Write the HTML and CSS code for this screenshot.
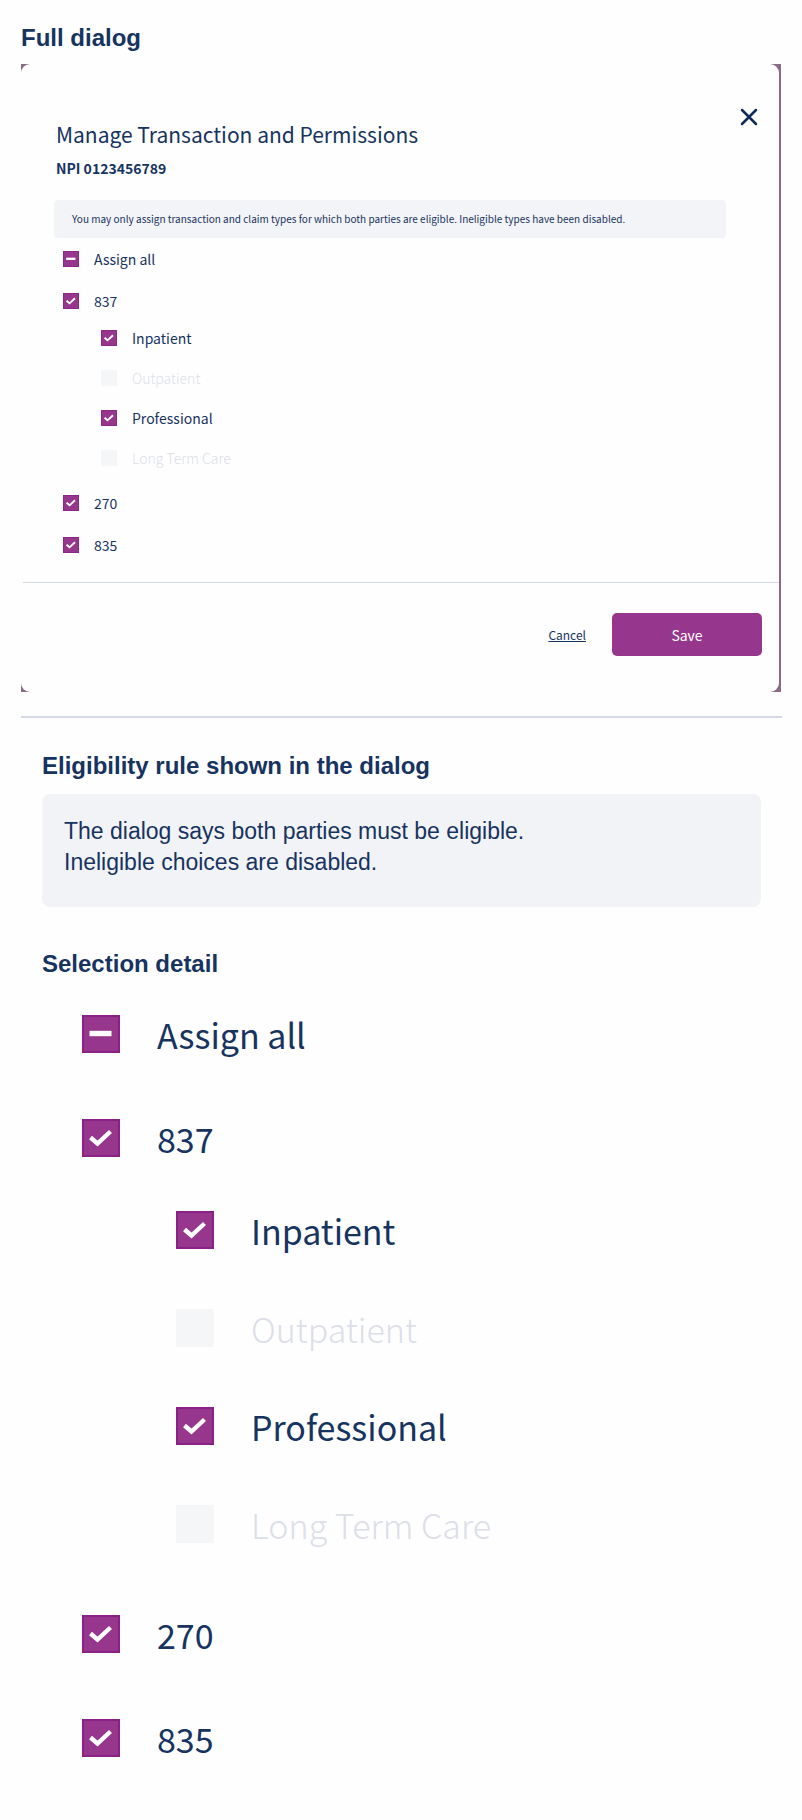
FILE: index.html
```html
<!DOCTYPE html>
<html lang="en">
<head>
  <meta charset="UTF-8">
  <meta name="viewport" content="width=device-width, initial-scale=1">
  <title>Manage Transaction and Permissions</title>
  <link rel="stylesheet" href="styles.css">
</head>
<body>

  <main class="page">
    <h2 class="heading">Full dialog</h2>

    <div class="backdrop">
      <form class="dialog" id="permissions">
        <div class="dialog-body">
          <header class="dialog-header">
            <div>
              <h1 class="title">Manage Transaction and Permissions</h1>
              <p class="npi">NPI 0123456789</p>
            </div>
            <button type="button" class="close" aria-label="Close">
              <svg width="18" height="18" viewBox="0 0 18 18">
                <path d="M2 2L16 16M16 2L2 16" fill="none" stroke="currentColor" stroke-width="2.5" stroke-linecap="round"/>
              </svg>
            </button>
          </header>

          <p class="notice">You may only assign transaction and claim types for which both parties are eligible. Ineligible types have been disabled.</p>

          <ul class="options">
            <li><label class="option"><input type="checkbox" name="all" class="partial">Assign all</label></li>
            <li>
              <label class="option"><input type="checkbox" name="837" checked>837</label>
              <ul class="suboptions">
                <li><label class="option"><input type="checkbox" name="inpatient" checked>Inpatient</label></li>
                <li><label class="option disabled"><input type="checkbox" name="outpatient" disabled>Outpatient</label></li>
                <li><label class="option"><input type="checkbox" name="professional" checked>Professional</label></li>
                <li><label class="option disabled"><input type="checkbox" name="longterm" disabled>Long Term Care</label></li>
              </ul>
            </li>
            <li><label class="option"><input type="checkbox" name="270" checked>270</label></li>
            <li><label class="option"><input type="checkbox" name="835" checked>835</label></li>
          </ul>
        </div>

        <footer class="dialog-footer">
          <a href="#" class="cancel">Cancel</a>
          <button type="submit" class="save">Save</button>
        </footer>
      </form>
    </div>

    <section class="details">
      <h2 class="heading">Eligibility rule shown in the dialog</h2>
      <p class="rule">The dialog says both parties must be eligible.<br>Ineligible choices are disabled.</p>

      <h2 class="heading">Selection detail</h2>
      <ul class="options large">
        <li><label class="option"><input type="checkbox" class="partial">Assign all</label></li>
        <li>
          <label class="option"><input type="checkbox" checked>837</label>
          <ul class="suboptions">
            <li><label class="option"><input type="checkbox" checked>Inpatient</label></li>
            <li><label class="option disabled"><input type="checkbox" disabled>Outpatient</label></li>
            <li><label class="option"><input type="checkbox" checked>Professional</label></li>
            <li><label class="option disabled"><input type="checkbox" disabled>Long Term Care</label></li>
          </ul>
        </li>
        <li><label class="option"><input type="checkbox" checked>270</label></li>
        <li><label class="option"><input type="checkbox" checked>835</label></li>
      </ul>
    </section>
  </main>

  <script>
    document.querySelectorAll('.partial').forEach(function(box) {
      box.indeterminate = true;
    });

    document.getElementById('permissions').addEventListener('submit', function(e) {
      e.preventDefault();
    });
  </script>

</body>
</html>
```
FILE: styles.css
```css
* {
  box-sizing: border-box;
}
body {
  margin: 0;
  background: #fefefe;
  color: #17335f;
  font-family: "Liberation Sans", Arial, sans-serif;
}
h1, h2, p, ul {
  margin: 0;
  padding: 0;
}
ul {
  list-style: none;
}
.page {
  padding: 24px 20px 24px 21px;
}
.heading {
  font-size: 24px;
  line-height: 28px;
  font-weight: bold;
}

/* dialog */
.backdrop {
  margin: 12px 1px 0 0;
  padding-right: 2px;
  background: #8a6a85;
}
.dialog {
  background: #fefefe;
  border-radius: 9px;
  font-family: "Noto Sans CJK SC", "Open Sans", sans-serif;
}
.dialog-body {
  padding: 44px 21px 16px 33px;
}
.dialog-header {
  display: flex;
  justify-content: space-between;
  align-items: flex-start;
  padding-left: 2px;
}
.title {
  margin-top: 10px;
  font-size: 21px;
  line-height: 32px;
  font-weight: normal;
}
.npi {
  margin-top: 6px;
  font-size: 14px;
  line-height: 24px;
  font-weight: bold;
}
.close {
  display: flex;
  padding: 0;
  border: none;
  background: none;
  color: #0f2a5c;
  cursor: pointer;
}
.notice {
  margin: 20px 32px 0 0;
  padding: 10px 18px;
  background: #f3f4f7;
  border-radius: 4px;
  font-size: 10px;
  line-height: 18px;
}

/* option lists */
.options {
  display: flex;
  flex-direction: column;
  gap: 8px;
  padding: 4px 9px;
  font-family: "Noto Sans CJK SC", "Open Sans", sans-serif;
  font-size: 14px;
}
.option {
  display: flex;
  align-items: center;
  gap: 15px;
  height: 34px;
}
.suboptions {
  padding-left: 38px;
}
.suboptions .option {
  height: 40px;
}
.option input {
  appearance: none;
  width: 16px;
  height: 16px;
  margin: 0;
  background: #f5f6f8 center / 100% no-repeat;
}
.option input:checked {
  background-color: #96368c;
  background-image: url("data:image/svg+xml,%3Csvg xmlns='http://www.w3.org/2000/svg' viewBox='0 0 38 38'%3E%3Cpath d='M1 1H37V37H1Z' fill='none' stroke='%238a2285' stroke-width='2'/%3E%3Cpath d='M8.5 18.5L15.5 24.5L28.5 12.5' fill='none' stroke='white' stroke-width='4.4'/%3E%3C/svg%3E");
}
.option input:indeterminate {
  background-color: #96368c;
  background-image: url("data:image/svg+xml,%3Csvg xmlns='http://www.w3.org/2000/svg' viewBox='0 0 38 38'%3E%3Cpath d='M1 1H37V37H1Z' fill='none' stroke='%238a2285' stroke-width='2'/%3E%3Cpath d='M7.5 18.5H29.5' stroke='white' stroke-width='5.4'/%3E%3C/svg%3E");
}
.disabled {
  color: #dcdee8;
  font-weight: 300;
}

.large {
  gap: 18px;
  padding: 13px 40px;
  font-size: 34px;
}
.large .option {
  gap: 37px;
  height: 86px;
}
.large .suboptions {
  padding-left: 94px;
}
.large .suboptions .option {
  height: 98px;
}
.large .option input {
  width: 38px;
  height: 38px;
}

/* dialog footer */
.dialog-footer {
  display: flex;
  justify-content: flex-end;
  align-items: center;
  gap: 26px;
  margin-left: 2px;
  padding: 30px 17px 36px;
  border-top: 1px solid #d3dae2;
}
.cancel {
  color: #17335f;
  font-size: 12px;
}
.save {
  width: 150px;
  height: 43px;
  border: none;
  border-radius: 5px;
  background: #96368c;
  color: #fff;
  font-family: inherit;
  font-size: 14px;
  cursor: pointer;
}

/* details below the dialog */
.details {
  margin-top: 24px;
  padding: 34px 21px 0;
  border-top: 2px solid #d5d9e3;
}
.rule {
  margin: 14px 0 43px;
  padding: 22px 22px 29px;
  background: #f2f3f7;
  border-radius: 8px;
  font-size: 23px;
  line-height: 31px;
}
```
